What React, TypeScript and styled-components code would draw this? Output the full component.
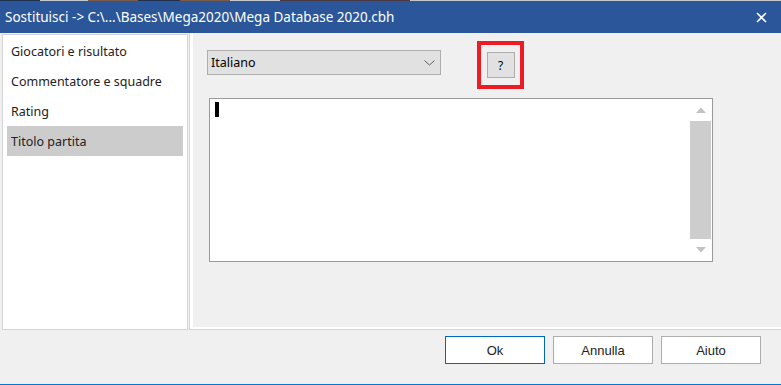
import React from "react";
import styled, { createGlobalStyle } from "styled-components";

const GlobalStyle = createGlobalStyle`
  html, body {
    margin: 0;
    padding: 0;
    background: #f0f0f0;
  }
  * {
    box-sizing: border-box;
  }
`;

const sections = [
  "Giocatori e risultato",
  "Commentatore e squadre",
  "Rating",
  "Titolo partita",
];

export default function App() {
  return (
    <>
      <GlobalStyle />
      <Window>
        <DesktopStrip />
        <TitleBar>
          <TitleText>
            Sostituisci -&gt; C:\...\Bases\Mega2020\Mega Database 2020.cbh
          </TitleText>
          <CloseButton>
            <svg width="11" height="11" viewBox="0 0 11 11">
              <path
                d="M1 1 L10 10 M10 1 L1 10"
                stroke="#fff"
                strokeWidth="1.6"
                fill="none"
              />
            </svg>
          </CloseButton>
        </TitleBar>

        <Body>
          <SectionList>
            {sections.map((s, i) => (
              <SectionItem key={s} selected={i === 3}>
                {s}
              </SectionItem>
            ))}
          </SectionList>

          <RightPanel>
            <PanelInner>
              <TopRow>
                <Combo>
                  <span>Italiano</span>
                  <svg width="11" height="6" viewBox="0 0 11 6">
                    <path
                      d="M0.5 0.5 L5.5 5 L10.5 0.5"
                      stroke="#606060"
                      strokeWidth="1"
                      fill="none"
                    />
                  </svg>
                </Combo>
                <Highlight>
                  <SmallButton>?</SmallButton>
                </Highlight>
              </TopRow>

              <TextArea>
                <TextContent>
                  <Caret />
                </TextContent>
                <ScrollBar>
                  <Arrow>
                    <svg width="10" height="6" viewBox="0 0 10 6">
                      <path d="M0 6 L5 0.5 L10 6 Z" fill="#c2c2c2" />
                    </svg>
                  </Arrow>
                  <Thumb />
                  <Arrow>
                    <svg width="10" height="6" viewBox="0 0 10 6">
                      <path d="M0 0 L10 0 L5 5.5 Z" fill="#c2c2c2" />
                    </svg>
                  </Arrow>
                </ScrollBar>
              </TextArea>
            </PanelInner>
          </RightPanel>
        </Body>

        <Footer>
          <DialogButton primary>Ok</DialogButton>
          <DialogButton>Annulla</DialogButton>
          <DialogButton>Aiuto</DialogButton>
        </Footer>
      </Window>
    </>
  );
}

const Window = styled.div`
  width: 781px;
  height: 385px;
  display: flex;
  flex-direction: column;
  background: #f0f0f0;
  border-bottom: 1px solid #0078d7;
  overflow: hidden;
`;

const DesktopStrip = styled.div`
  height: 1px;
  background: linear-gradient(
    to right,
    #1f3350 0 40px,
    #c4c8cc 40px 88px,
    #7a5a4a 88px 138px,
    #1f3350 138px 180px,
    #7a5a4a 180px 230px,
    #c4c8cc 230px 280px,
    #4a3a44 280px 410px,
    #c4c8cc 410px 800px
  );
`;

const TitleBar = styled.div`
  height: 32px;
  background: #2b579a;
  display: flex;
  align-items: center;
  justify-content: space-between;
  padding: 0 14px 0 5px;
`;

const TitleText = styled.div`
  color: #ffffff;
  font-family: "Noto Sans", sans-serif;
  font-size: 13.5px;
  white-space: nowrap;
`;

const CloseButton = styled.div`
  display: flex;
  align-items: center;
`;

const Body = styled.div`
  height: 297px;
  display: flex;
  padding-left: 2px;
`;

const SectionList = styled.div`
  width: 186px;
  margin-top: 1px;
  background: #ffffff;
  border: 1px solid #d5d5d5;
  padding: 1px 4px;
  display: flex;
  flex-direction: column;
`;

const SectionItem = styled.div<{ selected?: boolean }>`
  height: 30px;
  display: flex;
  align-items: center;
  padding-left: 4px;
  padding-top: 1px;
  font-family: "Noto Sans", sans-serif;
  font-size: 12.5px;
  color: #222;
  background: ${(p) => (p.selected ? "#cccccc" : "transparent")};
`;

const RightPanel = styled.div`
  flex: 1;
  margin-left: 1px;
  background: #ffffff;
  border-left: 1px solid #d5d5d5;
  border-bottom: 1px solid #d5d5d5;
  padding: 0 0 2px 3px;
  display: flex;
`;

const PanelInner = styled.div`
  flex: 1;
  background: #f0f0f0;
  padding: 8px 0 0 14px;
`;

const TopRow = styled.div`
  display: flex;
  align-items: flex-start;
`;

const Combo = styled.div`
  width: 234px;
  height: 25px;
  margin-top: 9px;
  background: #e1e1e1;
  border: 1px solid #adadad;
  display: flex;
  align-items: center;
  justify-content: space-between;
  padding: 0 5px 0 3px;
  font-family: "Noto Sans", sans-serif;
  font-size: 12.5px;
  color: #000;
`;

const Highlight = styled.div`
  margin-left: 36px;
  width: 47px;
  height: 48px;
  border: 4px solid #ed1c24;
  display: flex;
  align-items: center;
  justify-content: center;
`;

const SmallButton = styled.div`
  width: 28px;
  height: 26px;
  background: #e1e1e1;
  border: 1px solid #adadad;
  display: flex;
  align-items: center;
  justify-content: center;
  font-family: "Noto Sans", sans-serif;
  font-size: 12px;
  color: #000;
`;

const TextArea = styled.div`
  margin-top: 9px;
  margin-left: 2px;
  width: 504px;
  height: 164px;
  background: #ffffff;
  border: 1px solid #9a9a9a;
  display: flex;
`;

const TextContent = styled.div`
  flex: 1;
  padding: 3px 0 0 5px;
`;

const Caret = styled.div`
  width: 4px;
  height: 15px;
  background: #000;
`;

const ScrollBar = styled.div`
  width: 22px;
  padding-right: 1px;
  display: flex;
  flex-direction: column;
`;

const Arrow = styled.div`
  height: 22px;
  display: flex;
  align-items: center;
  justify-content: center;
`;

const Thumb = styled.div`
  flex: 1;
  background: #cdcdcd;
`;

const Footer = styled.div`
  flex: 1;
  display: flex;
  justify-content: flex-end;
  align-items: flex-start;
  gap: 8px;
  padding: 6px 20px 0 0;
`;

const DialogButton = styled.div<{ primary?: boolean }>`
  width: 100px;
  height: 28px;
  background: #ffffff;
  border: 1px solid ${(p) => (p.primary ? "#0067c0" : "#adadad")};
  display: flex;
  align-items: center;
  justify-content: center;
  font-family: "Liberation Sans", Arial, sans-serif;
  font-size: 13px;
  color: #222;
`;
